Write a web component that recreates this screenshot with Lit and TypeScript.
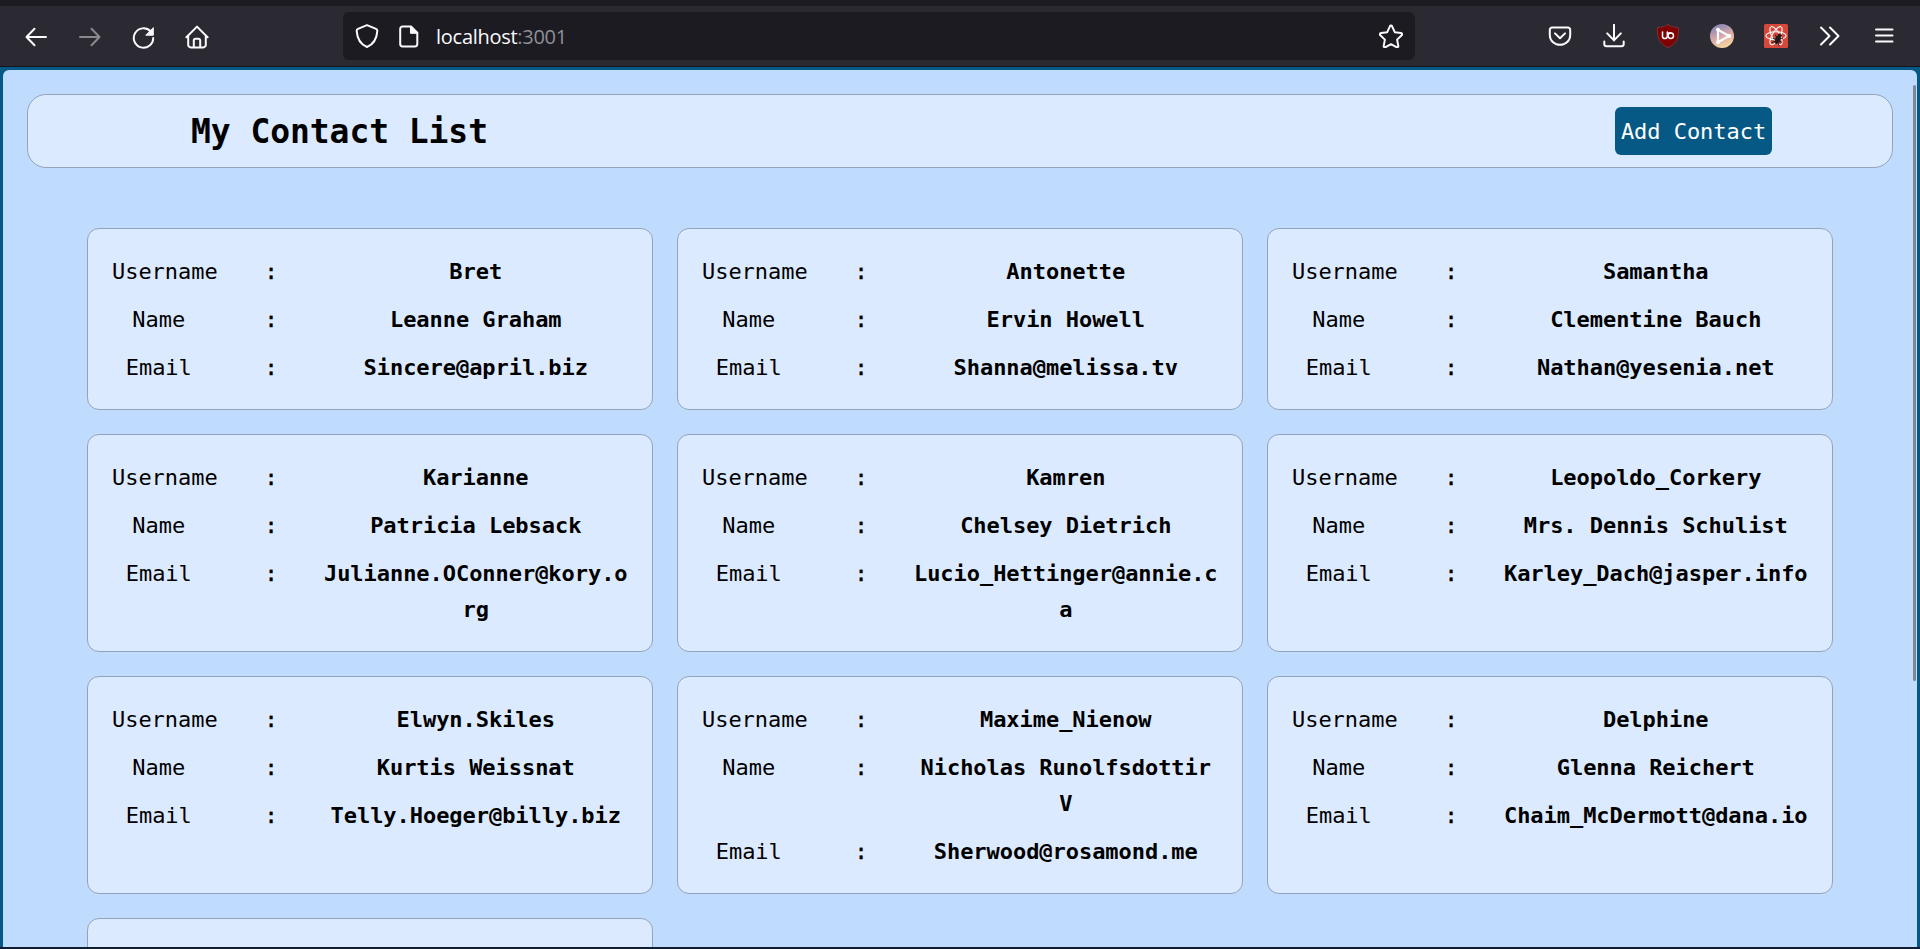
import { LitElement, html, css, svg, nothing } from "lit";
import { customElement, property } from "lit/decorators.js";

const CONTACTS: string[][] = [
  ["Bret", "Leanne Graham", "Sincere@april.biz"],
  ["Antonette", "Ervin Howell", "Shanna@melissa.tv"],
  ["Samantha", "Clementine Bauch", "Nathan@yesenia.net"],
  ["Karianne", "Patricia Lebsack", "Julianne.OConner@kory.org"],
  ["Kamren", "Chelsey Dietrich", "Lucio_Hettinger@annie.ca"],
  ["Leopoldo_Corkery", "Mrs. Dennis Schulist", "Karley_Dach@jasper.info"],
  ["Elwyn.Skiles", "Kurtis Weissnat", "Telly.Hoeger@billy.biz"],
  ["Maxime_Nienow", "Nicholas Runolfsdottir V", "Sherwood@rosamond.me"],
  ["Delphine", "Glenna Reichert", "Chaim_McDermott@dana.io"],
  [],
];

const icon = (body: unknown, cls = "") => html`<svg class="icon ${cls}" viewBox="0 0 24 24">${body}</svg>`;

const BACK = svg`<path d="M22 12H2.500M10.500 3.800 2.500 12l8 8.200"/>`;
const FORWARD = svg`<path d="M2 12h19.500M13.500 3.800l8 8.200-8 8.200"/>`;
const RELOAD = svg`<path d="M19.500 6.300A9.700 9.700 0 1 0 22.200 13"/><path class="solid" d="M22.300 3v7.200h-7.200z"/>`;
const HOME = svg`<path d="M1.400 12.200 12 1.600l10.600 10.600M3.200 10.600v9.200a2.600 2.600 0 0 0 2.600 2.600h12.400a2.600 2.600 0 0 0 2.600-2.600v-9.200M8.800 22v-6.400a1.800 1.800 0 0 1 1.800-1.800h2.800a1.800 1.800 0 0 1 1.800 1.800V22"/>`;
const SHIELD = svg`<path d="M12 1.200 21 4.900c1 .4 1.400 1.200 1.300 2.200C21.800 14.500 18 20.500 12 23 6 20.500 2.200 14.500 1.700 7.100 1.600 6.100 2 5.300 3 4.900z"/>`;
const FILE = svg`<path d="M5.600 2.500h8.400l6.300 6.300v11.200a2.400 2.400 0 0 1-2.400 2.400H5.600a2.400 2.400 0 0 1-2.400-2.400V4.900a2.400 2.400 0 0 1 2.400-2.400z"/><path class="solid" d="M13.500 2.500v6.800h6.800z"/>`;
const STAR = svg`<path d="M12 1.600c.5 0 .9.300 1.100.7l2.700 5.900 6.200.8c1.100.2 1.500 1.400.7 2.200l-4.600 4.400 1.200 6.300c.2 1.100-.9 1.800-1.800 1.300L12 20.200l-5.500 3c-.9.500-2-.2-1.800-1.300l1.200-6.300-4.600-4.400C.5 10.400.9 9.200 2 9l6.200-.8 2.700-5.900c.2-.4.6-.7 1.100-.7z"/>`;
const POCKET = svg`<path d="M4 3.600h16a2.200 2.200 0 0 1 2.200 2.200v5.400a10.200 9.600 0 0 1-20.400 0V5.800A2.200 2.200 0 0 1 4 3.600z"/><path d="m7 9.400 5 4.800 5-4.800"/>`;
const DOWNLOAD = svg`<path d="M12 .8v15.600M5.200 9.400l6.800 7 6.800-7M2.300 17.500v2.400a2.300 2.300 0 0 0 2.300 2.300h14.800a2.300 2.300 0 0 0 2.300-2.300v-2.400"/>`;
const UBLOCK = svg`<path class="badge" d="M12 .500c3.500 2.300 6.500 3 10.500 3 .5 9-1 15.500-10.500 20.200C2.500 19 1 12.500 1.500 3.500c4 0 7-.7 10.500-3z"/><path class="thin" d="M6.500 8v4.200a2.400 2.400 0 0 0 4.800 0V8"/><circle class="thin" cx="14.800" cy="11.700" r="2.700"/><path class="thin" d="M12 9h3"/>`;
const PLAYER = svg`<defs><linearGradient id="sky" x1=".3" y1="0" x2=".7" y2="1"><stop offset="0" stop-color="#8287b8"/><stop offset=".5" stop-color="#d8a8a8"/><stop offset="1" stop-color="#fbdc9e"/></linearGradient></defs><circle class="disc" cx="12" cy="12" r="12"/><path class="tri" d="M8 5.700v12.600L19 12z"/><circle class="dot" cx="8" cy="5.700" r="2"/><circle class="dot" cx="8" cy="18.300" r="2"/><circle class="dot" cx="19.300" cy="12" r="2"/>`;
const REACT = svg`<rect class="tile" width="24" height="24" rx="1.500"/><g class="orbit"><ellipse cx="12" cy="11.700" rx="10.200" ry="3.900"/><ellipse cx="12" cy="11.700" rx="10.200" ry="3.900" transform="rotate(60 12 11.700)"/><ellipse cx="12" cy="11.700" rx="10.200" ry="3.900" transform="rotate(120 12 11.700)"/></g><g class="bug" transform="rotate(25 14 15)"><ellipse cx="14" cy="16" rx="2.200" ry="3.800"/><circle cx="14" cy="11.200" r="1.500"/><path d="m10 12.500 2.500 1.800m5.500-1.800-2.500 1.800m-6 2.200h3m6 0h-3m-5.500 4.200 2.500-2.200m5.500 2.200-2.500-2.200"/></g>`;
const MORE = svg`<path d="m3 3.500 8.500 8.500L3 20.500M12 3.500l8.500 8.500-8.500 8.500"/>`;
const MENU = svg`<path d="M4 5.500h16.500M4 11.500h16.500M4 17.500h16.500"/>`;

@customElement("browser-bar")
class BrowserBar extends LitElement {
  static styles = css`
    :host { display: flex; box-sizing: border-box; height: 67px; padding: 0 24px; background: #2b2a33; border-top: 6px solid #1c1b22; border-bottom: 1px solid #10151f; align-items: center; flex: none; }
    .icon { display: block; width: 24px; height: 24px; fill: none; stroke: #fbfbfe; stroke-width: 2; stroke-linecap: round; stroke-linejoin: round; flex: none; }
    .dim { opacity: .45; }
    .solid { fill: #fbfbfe; stroke-width: 1; }
    .nav, .tools { display: flex; gap: 29.7px; }
    .nav { padding-top: 2px; }
    .tools { gap: 30px; margin-left: auto; }
    .address { display: flex; align-items: center; box-sizing: border-box; width: 1072px; height: 48px; margin-left: 134px; padding: 0 12px; border-radius: 6px; background: #1c1b22; }
    .file { margin-left: 18px; }
    .url { margin-left: 15px; padding-top: 2px; font: 20px/30px "Open Sans", sans-serif; letter-spacing: -.28px; color: #fbfbfe; }
    .port { color: #8f8f97; }
    .star { margin-left: auto; }
    .badge { fill: #800000; stroke: #7c3038; stroke-width: 1; }
    .thin { stroke-width: 1.5; }
    .disc { fill: url(#sky); stroke: none; }
    .tri { stroke-width: 2.2; }
    .dot { fill: #fff; stroke: none; }
    .tile { fill: #d6493a; stroke: none; }
    .orbit { stroke-width: 1.1; }
    .bug { fill: #221a1a; stroke: #221a1a; stroke-width: .9; }
  `;
  render() {
    return html`
      <div class="nav">${icon(BACK)}${icon(FORWARD, "dim")}${icon(RELOAD)}${icon(HOME)}</div>
      <div class="address">
        ${icon(SHIELD)}${icon(FILE, "file")}
        <span class="url">localhost<span class="port">:3001</span></span>
        ${icon(STAR, "star")}
      </div>
      <div class="tools">${[POCKET, DOWNLOAD, UBLOCK, PLAYER, REACT, MORE, MENU].map((i) => icon(i))}</div>
    `;
  }
}

@customElement("contact-card")
class ContactCard extends LitElement {
  @property({ attribute: false }) contact: string[] = [];
  static styles = css`
    :host { display: block; box-sizing: border-box; min-height: 182px; padding: 18px 24px; border: 1px solid #94a3b8; border-radius: 12px; background: #dbeafe; }
    .row { display: grid; grid-template-columns: 93.5px 118px 304.5px; padding: 7px 0 5px; text-align: center; }
    .label { display: flex; justify-content: center; }
    .wide { justify-content: flex-start; }
    .colon { padding-left: 13px; -webkit-text-stroke: .4px #000; }
    .value { font-weight: 700; overflow-wrap: anywhere; }
  `;
  render() {
    if (!this.contact.length) return nothing;
    return ["Username", "Name", "Email"].map(
      (label, i) => html`<div class="row">
        <span class="label ${i === 0 ? "wide" : ""}">${label}</span><span class="colon">:</span><span class="value">${this.contact[i]}</span>
      </div>`
    );
  }
}

@customElement("app-root")
class AppRoot extends LitElement {
  static styles = css`
    :host { display: flex; flex-direction: column; height: 949px; overflow: hidden; box-sizing: border-box; border-bottom: 2px solid #111d30; background: #075985; color: #000; font: 22px/36px "DejaVu Sans Mono", monospace; letter-spacing: -.045px; }
    .page { position: relative; flex: 1; min-height: 0; overflow: hidden; box-sizing: border-box; margin: 3px 3px 0; padding: 24px; border-radius: 6px 6px 0 0; background: #bfdbfe; }
    .header { display: flex; align-items: center; justify-content: space-between; box-sizing: border-box; height: 74px; padding: 0 120px 0 163px; border: 1px solid #94a3b8; border-radius: 19px; background: #dbeafe; }
    .title { margin: 0; padding-top: 2px; font-size: 33px; line-height: 48px; font-weight: 700; letter-spacing: -.07px; }
    .add { box-sizing: border-box; width: 157px; height: 48px; padding: 2px 0 0; border: 0; border-radius: 6px; background: #075985; color: #fff; font: inherit; letter-spacing: inherit; }
    .grid { display: grid; grid-template-columns: repeat(3, 1fr); gap: 24px; padding: 60px; }
    .thumb { position: absolute; top: 15px; right: 1px; width: 3px; height: 596px; border-radius: 2px; background: #808894; }
  `;
  render() {
    return html`
      <browser-bar></browser-bar>
      <main class="page">
        <header class="header"><h1 class="title">My Contact List</h1><button class="add">Add Contact</button></header>
        <section class="grid">${CONTACTS.map((c) => html`<contact-card .contact=${c}></contact-card>`)}</section>
        <div class="thumb"></div>
      </main>
    `;
  }
}
